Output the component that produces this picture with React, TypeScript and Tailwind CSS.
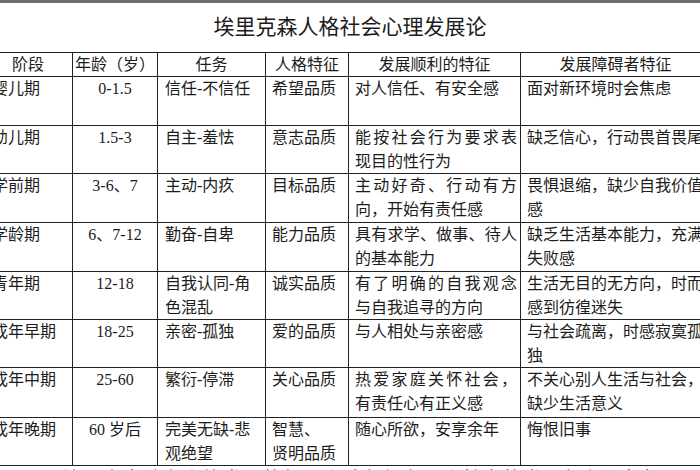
const font = 'font-["Liberation_Serif","Noto_Sans_CJK_SC",serif]'

interface StageRow {
  h: string
  stage: string
  age: string
  task: string[]
  trait: string[]
  good: string[]
  bad: string[]
}

const rows: StageRow[] = [
  { h: 'h-[49px]', stage: '婴儿期', age: '0-1.5', task: ['信任-不信任'], trait: ['希望品质'], good: ['对人信任、有安全感'], bad: ['面对新环境时会焦虑'] },
  { h: 'h-[48px]', stage: '幼儿期', age: '1.5-3', task: ['自主-羞怯'], trait: ['意志品质'], good: ['能按社会行为要求表', '现目的性行为'], bad: ['缺乏信心，行动畏首畏尾'] },
  { h: 'h-[49px]', stage: '学前期', age: '3-6、7', task: ['主动-内疚'], trait: ['目标品质'], good: ['主动好奇、行动有方', '向，开始有责任感'], bad: ['畏惧退缩，缺少自我价值', '感'] },
  { h: 'h-[49px]', stage: '学龄期', age: '6、7-12', task: ['勤奋-自卑'], trait: ['能力品质'], good: ['具有求学、做事、待人', '的基本能力'], bad: ['缺乏生活基本能力，充满', '失败感'] },
  { h: 'h-[48px]', stage: '青年期', age: '12-18', task: ['自我认同-角', '色混乱'], trait: ['诚实品质'], good: ['有了明确的自我观念', '与自我追寻的方向'], bad: ['生活无目的无方向，时而', '感到彷徨迷失'] },
  { h: 'h-[48px]', stage: '成年早期', age: '18-25', task: ['亲密-孤独'], trait: ['爱的品质'], good: ['与人相处与亲密感'], bad: ['与社会疏离，时感寂寞孤', '独'] },
  { h: 'h-[50px]', stage: '成年中期', age: '25-60', task: ['繁衍-停滞'], trait: ['关心品质'], good: ['热爱家庭关怀社会，', '有责任心有正义感'], bad: ['不关心别人生活与社会，', '缺少生活意义'] },
  { h: 'h-[48px]', stage: '成年晚期', age: '60 岁后', task: ['完美无缺-悲', '观绝望'], trait: ['智慧、', '贤明品质'], good: ['随心所欲，安享余年'], bad: ['悔恨旧事'] },
]

const cols = ['w-[89px]', 'w-[85px]', 'w-[108px]', 'w-[83px]', 'w-[172px]', 'w-[190px]']

function Lines({ lines, justify }: { lines: string[]; justify?: boolean }) {
  return (
    <>
      {lines.map((l, i) => (
        <div
          key={i}
          className={
            justify && i < lines.length - 1
              ? 'whitespace-nowrap text-justify [text-align-last:justify]'
              : 'whitespace-nowrap'
          }
        >
          {l}
        </div>
      ))}
    </>
  )
}

export default function App() {
  const cell = 'shrink-0 border-r border-[#222] leading-[24px] overflow-hidden'
  return (
    <div className={`w-[700px] h-[470px] overflow-hidden bg-white text-[#1c1c1c] ${font}`}>
      <div className="h-[3px] bg-[#6e6e6e]" />
      <div className="h-[49px] flex items-center justify-center text-[21px]">
        埃里克森人格社会心理发展论
      </div>

      <div className="ml-[-16px] w-[727px] border-t border-[#222] text-[16px]">
        <div className="flex h-[24px] border-b border-[#222]">
          {['阶段', '年龄（岁）', '任务', '人格特征', '发展顺利的特征', '发展障碍者特征'].map((t, i) => (
            <div key={t} className={`${cell} ${cols[i]} text-center whitespace-nowrap`}>
              {t}
            </div>
          ))}
        </div>

        {rows.map((r) => (
          <div key={r.stage} className={`flex ${r.h} border-b border-[#222]`}>
            <div className={`${cell} ${cols[0]} pl-[8px] whitespace-nowrap`}>{r.stage}</div>
            <div className={`${cell} ${cols[1]} text-center whitespace-nowrap`}>{r.age}</div>
            <div className={`${cell} ${cols[2]} pl-[7px]`}>
              <Lines lines={r.task} />
            </div>
            <div className={`${cell} ${cols[3]} pl-[6px]`}>
              <Lines lines={r.trait} />
            </div>
            <div className={`${cell} ${cols[4]} pl-[6px] pr-[3px]`}>
              <Lines lines={r.good} justify />
            </div>
            <div className={`${cell} ${cols[5]} pl-[6px]`}>
              <Lines lines={r.bad} />
            </div>
          </div>
        ))}
      </div>

      <p className="mt-[3px] pl-[62px] text-[20px] leading-[22px] whitespace-nowrap">
        埃里克森认为人格发展的每一个阶段都有一个特定的发展任务与危机
      </p>
    </div>
  )
}
